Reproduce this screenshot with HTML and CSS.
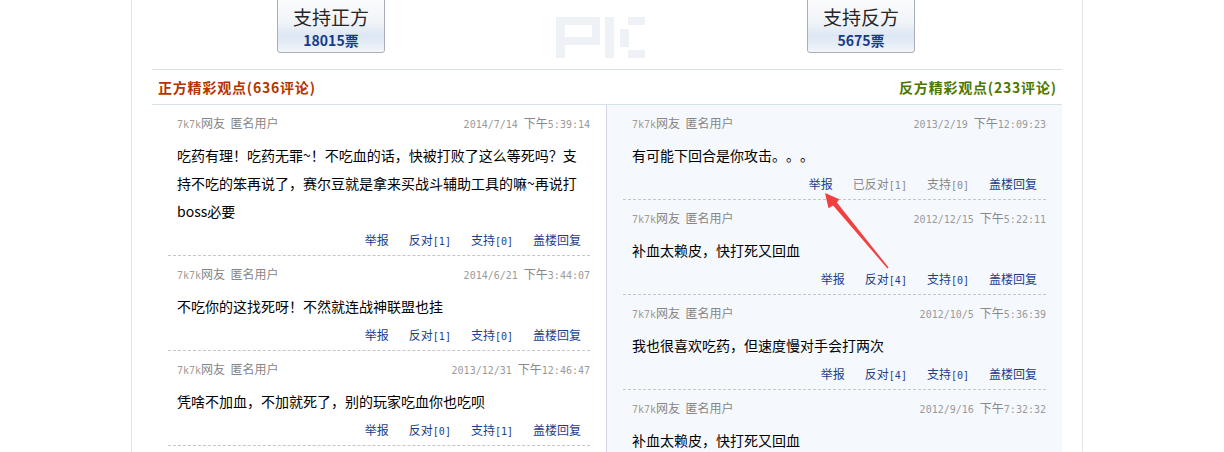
FILE: index.html
```html
<!DOCTYPE html>
<html lang="zh-CN">
<head>
<meta charset="utf-8">
<title>PK</title>
<link rel="stylesheet" href="styles.css">
</head>
<body>
<div class="wrap">
  <div class="top">
    <div class="vote vote-left">
      <div class="vote-title">支持正方</div>
      <div class="vote-count">18015票</div>
    </div>
    <svg class="pk" width="90" height="41" viewBox="0 0 90 41">
      <g fill="#eef2f7">
        <rect x="0" y="0" width="9" height="41"/>
        <rect x="0" y="0" width="44" height="8"/>
        <rect x="36" y="0" width="8" height="28"/>
        <rect x="0" y="20" width="44" height="8"/>
        <rect x="49" y="0" width="9" height="41"/>
        <rect x="64" y="12" width="9" height="18"/>
        <rect x="72" y="0" width="17" height="8"/>
        <rect x="72" y="33" width="17" height="8"/>
      </g>
    </svg>
    <div class="vote vote-right">
      <div class="vote-title">支持反方</div>
      <div class="vote-count">5675票</div>
    </div>
  </div>

  <div class="head">
    <span class="head-pro">正方精彩观点(636评论)</span>
    <span class="head-con">反方精彩观点(233评论)</span>
  </div>

  <div class="cols">
    <div class="col col-left">
      <div class="item">
        <div class="meta"><span><b class="site">7k7k</b>网友&nbsp; 匿名用户</span><span class="date">2014/7/14 <i>下午</i>5:39:14</span></div>
        <div class="body">吃药有理！吃药无罪~！不吃血的话，快被打败了这么等死吗？支持不吃的笨再说了，赛尔豆就是拿来买战斗辅助工具的嘛~再说打boss必要</div>
        <div class="acts"><a>举报</a><a>反对<span class="n">[1]</span></a><a>支持<span class="n">[0]</span></a><a>盖楼回复</a></div>
      </div>
      <div class="item">
        <div class="meta"><span><b class="site">7k7k</b>网友&nbsp; 匿名用户</span><span class="date">2014/6/21 <i>下午</i>3:44:07</span></div>
        <div class="body">不吃你的这找死呀！不然就连战神联盟也挂</div>
        <div class="acts"><a>举报</a><a>反对<span class="n">[1]</span></a><a>支持<span class="n">[0]</span></a><a>盖楼回复</a></div>
      </div>
      <div class="item">
        <div class="meta"><span><b class="site">7k7k</b>网友&nbsp; 匿名用户</span><span class="date">2013/12/31 <i>下午</i>12:46:47</span></div>
        <div class="body">凭啥不加血，不加就死了，别的玩家吃血你也吃呗</div>
        <div class="acts"><a>举报</a><a>反对<span class="n">[0]</span></a><a>支持<span class="n">[1]</span></a><a>盖楼回复</a></div>
      </div>
    </div>

    <div class="col col-right">
      <div class="item">
        <div class="meta"><span><b class="site">7k7k</b>网友&nbsp; 匿名用户</span><span class="date">2013/2/19 <i>下午</i>12:09:23</span></div>
        <div class="body">有可能下回合是你攻击。。。</div>
        <div class="acts"><a>举报</a><a class="done">已反对<span class="n">[1]</span></a><a class="done">支持<span class="n">[0]</span></a><a>盖楼回复</a></div>
      </div>
      <div class="item">
        <div class="meta"><span><b class="site">7k7k</b>网友&nbsp; 匿名用户</span><span class="date">2012/12/15 <i>下午</i>5:22:11</span></div>
        <div class="body">补血太赖皮，快打死又回血</div>
        <div class="acts"><a>举报</a><a>反对<span class="n">[4]</span></a><a>支持<span class="n">[0]</span></a><a>盖楼回复</a></div>
      </div>
      <div class="item">
        <div class="meta"><span><b class="site">7k7k</b>网友&nbsp; 匿名用户</span><span class="date">2012/10/5 <i>下午</i>5:36:39</span></div>
        <div class="body">我也很喜欢吃药，但速度慢对手会打两次</div>
        <div class="acts"><a>举报</a><a>反对<span class="n">[4]</span></a><a>支持<span class="n">[0]</span></a><a>盖楼回复</a></div>
      </div>
      <div class="item">
        <div class="meta"><span><b class="site">7k7k</b>网友&nbsp; 匿名用户</span><span class="date">2012/9/16 <i>下午</i>7:32:32</span></div>
        <div class="body">补血太赖皮，快打死又回血</div>
      </div>
    </div>

    <svg class="arrow" width="75" height="85" viewBox="0 0 75 85">
      <polygon fill="#f23f3f" points="5,5 19.3,11.3 16.9,14.4 68.6,79.6 67.4,80.4 13.1,17.6 8.5,20.3"/>
    </svg>
  </div>
</div>
</body>
</html>
```

FILE: styles.css
```css
* {
  box-sizing: border-box;
}

body {
  margin: 0;
  background: #fff;
  font-family: "Noto Sans CJK SC", "Liberation Sans", sans-serif;
  font-size: 12px;
  color: #000;
  overflow: hidden;
  text-spacing-trim: space-all;
}

.wrap {
  width: 952px;
  margin-left: 131px;
  height: 452px;
  overflow: hidden;
  padding: 0 20px;
  border-left: 1px solid #dfe5ea;
  border-right: 1px solid #dfe5ea;
}

/* vote area */
.top {
  height: 69px;
  display: flex;
  align-items: flex-start;
}

.vote {
  width: 108px;
  height: 57px;
  margin-top: -4px;
  padding-top: 9px;
  border: 1px solid #a8afb7;
  border-radius: 3px;
  text-align: center;
  background: linear-gradient(#fcfdfe 0%, #f1f4f8 45%, #dde7f3 70%, #e5ecf6 85%, #f3f6fa 100%);
}

.vote-left {
  margin-left: 125px;
}

.vote-right {
  margin-left: 161px;
}

.vote-title {
  font-size: 19px;
  line-height: 22px;
  color: #262626;
}

.vote-count {
  margin-top: 3px;
  font-size: 14px;
  line-height: 18px;
  font-weight: bold;
  color: #17398a;
}

.pk {
  margin: 17px 0 0 171px;
}

/* section header */
.head {
  height: 36px;
  display: flex;
  justify-content: space-between;
  align-items: center;
  padding: 0 6px;
  border-top: 1px solid #d6e2ea;
  border-bottom: 1px solid #d6e2ea;
  font-size: 14px;
  font-weight: bold;
  letter-spacing: 0.8px;
}

.head-pro {
  color: #b53400;
}

.head-con {
  color: #4d7800;
  margin-right: -0.8px;
}

/* columns */
.cols {
  position: relative;
  display: grid;
  grid-template-columns: 455px 455px;
}

.col {
  padding: 0 16px;
  min-height: 347px;
}

.col-left {
  border-right: 1px solid #d2d5e6;
}

.col-right {
  background: #f5f9fe;
}

.item {
  padding: 8px 0 5px 9px;
  border-bottom: 1px dashed #c6c6c6;
}

.meta {
  height: 20px;
  display: flex;
  justify-content: space-between;
  align-items: center;
  color: #868686;
  font-size: 12px;
  line-height: 20px;
}

.meta span {
  line-height: 20px;
  height: 20px;
}

.site {
  font-weight: normal;
  font-family: "DejaVu Sans Mono", "Liberation Mono", monospace;
  font-size: 10px;
  color: #a39b92;
}

.date {
  font-family: "DejaVu Sans Mono", "Liberation Mono", monospace;
  font-size: 10px;
  color: #9a9a9a;
}

.date i {
  font-style: normal;
  font-family: "Noto Sans CJK SC", sans-serif;
  font-size: 12px;
  color: #888;
}

.body {
  padding: 8px 3px 0 0;
  font-size: 14px;
  line-height: 28px;
  color: #000;
}

.acts {
  height: 20px;
  margin-top: 5px;
  padding-right: 9px;
  line-height: 20px;
  text-align: right;
  font-size: 12px;
}

.acts a {
  margin-left: 20px;
  color: #1b3d8c;
  text-decoration: none;
}

.acts a.done {
  color: #888;
}

.n {
  font-family: "DejaVu Sans Mono", "Liberation Mono", monospace;
  font-size: 10px;
}

.arrow {
  position: absolute;
  left: 668px;
  top: 83px;
}
```
